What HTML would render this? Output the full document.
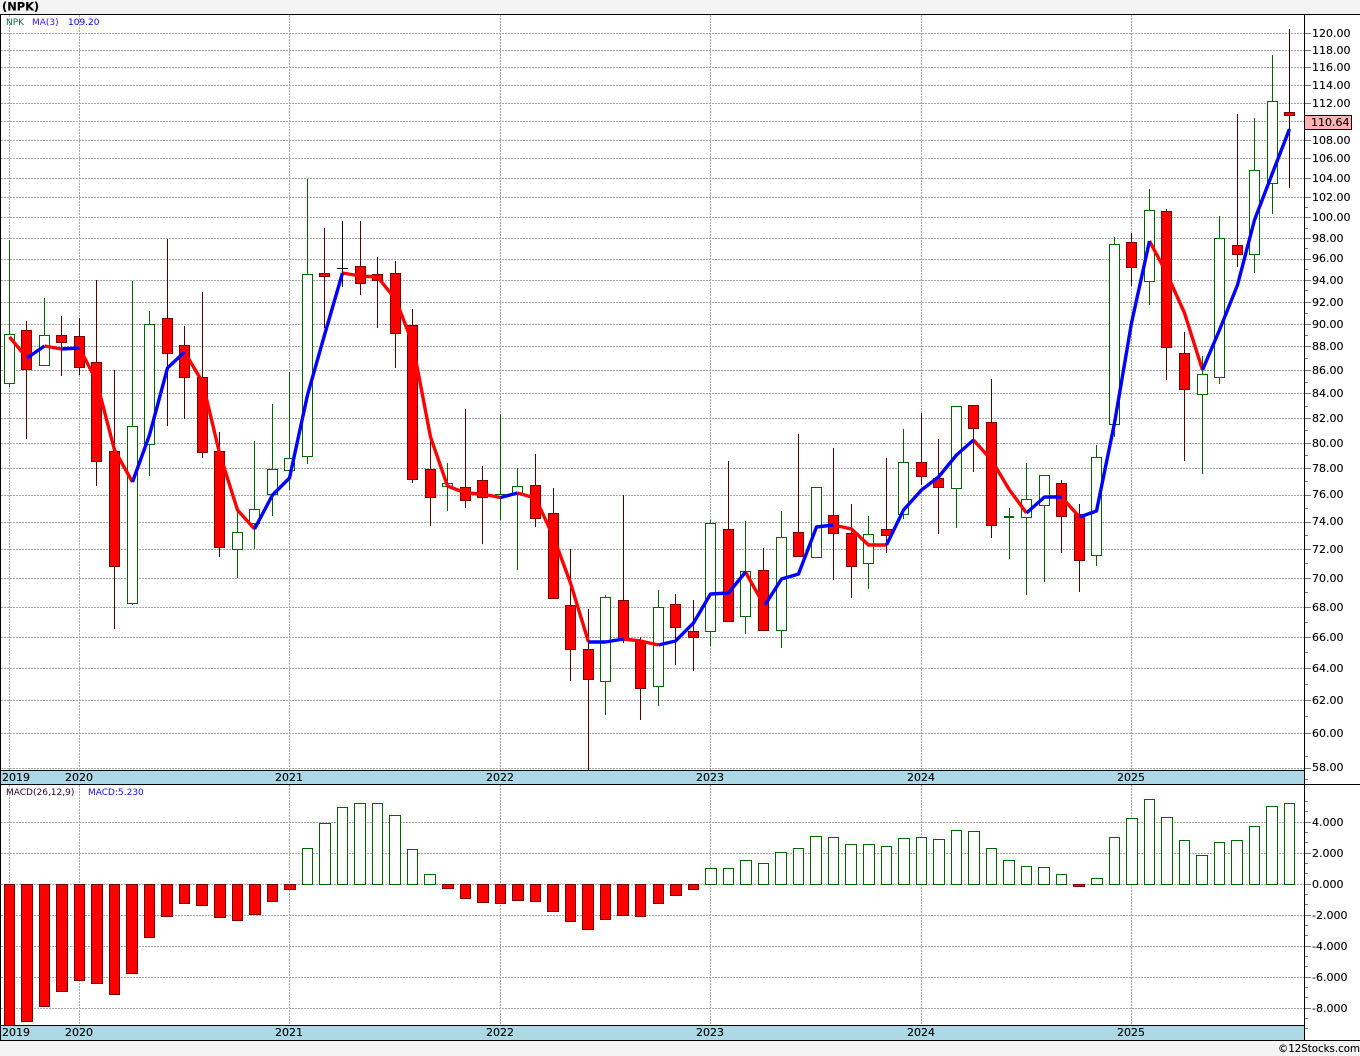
<!DOCTYPE html>
<html><head><meta charset="utf-8"><title>NPK</title>
<style>html,body{margin:0;padding:0;background:#f3f3f3;width:1360px;height:1056px;overflow:hidden}svg{display:block}text{font-family:"DejaVu Sans","Liberation Sans",sans-serif;font-size:11px;fill:#000;stroke:#000;stroke-width:.12px}</style></head>
<body>
<svg width="1360" height="1056" viewBox="0 0 1360 1056" xmlns="http://www.w3.org/2000/svg">
<rect x="0" y="0" width="1360" height="1056" fill="#f3f3f3"/>
<rect x="0" y="14" width="1360" height="1027" fill="#fff"/>
<text x="2" y="10.5" style="font-weight:bold;font-size:11.4px;fill:#000">(NPK)</text>
<g shape-rendering="crispEdges">
<path fill="none" stroke="#a8a8a8" stroke-dasharray="2 1" d="M1 33.5H1304M1 50.5H1304M1 67.5H1304M1 85.5H1304M1 103.5H1304M1 121.5H1304M1 140.5H1304M1 158.5H1304M1 178.5H1304M1 197.5H1304M1 217.5H1304M1 238.5H1304M1 259.5H1304M1 280.5H1304M1 302.5H1304M1 324.5H1304M1 346.5H1304M1 370.5H1304M1 393.5H1304M1 418.5H1304M1 443.5H1304M1 468.5H1304M1 495.5H1304M1 522.5H1304M1 549.5H1304M1 578.5H1304M1 607.5H1304M1 637.5H1304M1 668.5H1304M1 700.5H1304M1 733.5H1304M1 768.5H1304M1 822.5H1304M1 853.5H1304M1 884.5H1304M1 915.5H1304M1 946.5H1304M1 977.5H1304M1 1008.5H1304M9.5 15V770M79.5 15V770M289.5 15V770M500.5 15V770M710.5 15V770M921.5 15V770M1131.5 15V770M9.5 785V1025M79.5 785V1025M289.5 785V1025M500.5 785V1025M710.5 785V1025M921.5 785V1025M1131.5 785V1025"/>
<!-- wicks -->
<path fill="none" stroke="#006400" d="M9.5 240V387M44.5 298V365M132.5 281V605M149.5 311V476M237.5 510V578M254.5 441V549M272.5 404V516M289.5 372V490M307.5 179V464M447.5 463V511M500.5 414V520M517.5 468V570M605.5 595V715M658.5 590V706M710.5 520V646M745.5 521V634M781.5 511V648M816.5 487V557M868.5 516V589M903.5 429V519M956.5 406V528M1009.5 508V559M1026.5 463V595M1044.5 475V582M1096.5 445V566M1114.5 237V437M1149.5 189V305M1202.5 356V474M1219.5 216V384M1254.5 118V273M1272.5 55V214"/>
<path fill="none" stroke="#550000" d="M26.5 321V439M61.5 316V376M79.5 318V375M96.5 280V486M114.5 370V629M167.5 239V426M184.5 326V419M202.5 292V458M219.5 432V557M324.5 228V328M360.5 221V295M377.5 257V328M395.5 261V368M412.5 309V483M430.5 438V526M465.5 409V508M482.5 466V544M535.5 454V527M553.5 488V598M570.5 549V681M588.5 609V770M623.5 495V643M640.5 637V720M675.5 594V665M693.5 600V671M728.5 461V622M763.5 548V631M798.5 434V556M833.5 448V580M851.5 504V598M886.5 458V553M921.5 413V485M938.5 439V534M973.5 405V472M991.5 379V538M1061.5 480V553M1079.5 504V592M1131.5 233V286M1166.5 209V380M1184.5 332V461M1237.5 114V267"/>
<path fill="none" stroke="#3a0000" d="M1289.5 29V188"/>
<path fill="none" stroke="#000" d="M342.5 221V287M337 268.5H348"/>
<!-- green bodies -->
<path fill="#fff" stroke="#006400" d="M4.5 334.5h10V383.5h-10ZM39.5 335.5h10V365.5h-10ZM127.5 426.5h10V603.5h-10ZM144.5 324.5h10V444.5h-10ZM232.5 532.5h10V549.5h-10ZM249.5 509.5h10V523.5h-10ZM267.5 469.5h10V494.5h-10ZM284.5 458.5h10V470.5h-10ZM302.5 274.5h10V456.5h-10ZM442.5 483.5h10V486.5h-10ZM495.5 494.5h10V497.5h-10ZM512.5 486.5h10V493.5h-10ZM600.5 597.5h10V681.5h-10ZM653.5 607.5h10V686.5h-10ZM705.5 523.5h10V631.5h-10ZM740.5 571.5h10V616.5h-10ZM776.5 537.5h10V630.5h-10ZM811.5 487.5h10V557.5h-10ZM863.5 534.5h10V563.5h-10ZM898.5 462.5h10V514.5h-10ZM951.5 406.5h10V488.5h-10ZM1021.5 499.5h10V517.5h-10ZM1039.5 475.5h10V505.5h-10ZM1091.5 457.5h10V555.5h-10ZM1109.5 244.5h10V424.5h-10ZM1144.5 210.5h10V281.5h-10ZM1197.5 374.5h10V394.5h-10ZM1214.5 238.5h10V377.5h-10ZM1249.5 170.5h10V254.5h-10ZM1267.5 101.5h10V183.5h-10Z"/>
<rect x="1004" y="516" width="10" height="2" fill="#006400"/>
<!-- red bodies -->
<path fill="#f00" stroke="#7a0000" d="M21.5 330.5h10V369.5h-10ZM56.5 335.5h10V342.5h-10ZM74.5 336.5h10V367.5h-10ZM91.5 362.5h10V461.5h-10ZM109.5 451.5h10V566.5h-10ZM162.5 318.5h10V353.5h-10ZM179.5 345.5h10V377.5h-10ZM197.5 377.5h10V452.5h-10ZM214.5 451.5h10V547.5h-10ZM319.5 273.5h10V276.5h-10ZM355.5 266.5h10V283.5h-10ZM372.5 274.5h10V280.5h-10ZM390.5 273.5h10V333.5h-10ZM407.5 325.5h10V479.5h-10ZM425.5 469.5h10V497.5h-10ZM460.5 487.5h10V500.5h-10ZM477.5 480.5h10V497.5h-10ZM530.5 485.5h10V518.5h-10ZM548.5 513.5h10V598.5h-10ZM565.5 605.5h10V649.5h-10ZM583.5 649.5h10V679.5h-10ZM618.5 600.5h10V640.5h-10ZM635.5 641.5h10V688.5h-10ZM670.5 604.5h10V627.5h-10ZM688.5 631.5h10V637.5h-10ZM723.5 529.5h10V621.5h-10ZM758.5 570.5h10V630.5h-10ZM793.5 532.5h10V556.5h-10ZM828.5 515.5h10V533.5h-10ZM846.5 533.5h10V566.5h-10ZM881.5 529.5h10V535.5h-10ZM916.5 462.5h10V476.5h-10ZM933.5 478.5h10V487.5h-10ZM968.5 405.5h10V428.5h-10ZM986.5 422.5h10V525.5h-10ZM1056.5 483.5h10V516.5h-10ZM1074.5 514.5h10V560.5h-10ZM1126.5 242.5h10V267.5h-10ZM1161.5 211.5h10V347.5h-10ZM1179.5 353.5h10V389.5h-10ZM1232.5 245.5h10V254.5h-10ZM1284.5 112.5h10V115.5h-10Z"/>
</g>
<!-- MA -->
<g fill="none" stroke-width="3.4" stroke-linejoin="round">
<path stroke="#f00" d="M9.5 337L27 358M44.5 346L61.5 349M79.5 348L96.5 381L114.5 450L132.5 482M184.5 352L202.5 382L219.5 453L237.5 510L254.5 529M342.5 273L360.5 276L377.5 277L395.5 299L412.5 343L430.5 437L447.5 486L465.5 493L482.5 494L500.5 497.5M517.5 493L535.5 498L553.5 537L570.5 583L588.5 642M623.5 639L640.5 641L658.5 645M745.5 572L765 607M833.5 525L851.5 529L868.5 545L886.5 545M973.5 440L991.5 460L1009.5 490L1026.5 513M1061.5 497L1079.5 517M1149.5 241L1166.5 273L1184.5 313L1202.5 370"/>
<path stroke="#00f" d="M27 358L44.5 346M61.5 349L79.5 348M132.5 482L149.5 435L167.5 368L184.5 352M254.5 529L272.5 495L289.5 478L307.5 395L324.5 335L342.5 273M500.5 497.5L517.5 493M588.5 642L605.5 642L623.5 639M658.5 645L675.5 641L693.5 623L710.5 594L728.5 593L745.5 572M765 605L781.5 579L798.5 574L816.5 527L833.5 525M886.5 545L903.5 510L921.5 490L938.5 477L956.5 455L973.5 440M1026.5 513L1044.5 497L1061.5 497M1079.5 517L1096.5 511L1114.5 423L1131.5 323L1149.5 241M1202.5 370L1219.5 330L1237.5 285L1254.5 220L1272.5 173L1289.5 129"/>
</g>
<g shape-rendering="crispEdges">
<!-- MACD -->
<path fill="#f00" stroke="#7a0000" d="M4.5 884.5H14.5V1025.5H4.5ZM21.5 884.5H32.5V1021.5H21.5ZM39.5 884.5H49.5V1006.5H39.5ZM56.5 884.5H67.5V991.5H56.5ZM74.5 884.5H84.5V980.5H74.5ZM91.5 884.5H102.5V983.5H91.5ZM109.5 884.5H119.5V994.5H109.5ZM126.5 884.5H137.5V973.5H126.5ZM144.5 884.5H154.5V937.5H144.5ZM161.5 884.5H172.5V916.5H161.5ZM179.5 884.5H189.5V903.5H179.5ZM196.5 884.5H207.5V905.5H196.5ZM214.5 884.5H225.5V917.5H214.5ZM232.5 884.5H242.5V920.5H232.5ZM249.5 884.5H260.5V914.5H249.5ZM267.5 884.5H277.5V901.5H267.5ZM284.5 884.5H295.5V889.5H284.5ZM442.5 884.5H453.5V888.5H442.5ZM460.5 884.5H470.5V898.5H460.5ZM477.5 884.5H488.5V902.5H477.5ZM495.5 884.5H505.5V903.5H495.5ZM512.5 884.5H523.5V900.5H512.5ZM530.5 884.5H540.5V901.5H530.5ZM547.5 884.5H558.5V911.5H547.5ZM565.5 884.5H575.5V921.5H565.5ZM582.5 884.5H593.5V929.5H582.5ZM600.5 884.5H610.5V919.5H600.5ZM617.5 884.5H628.5V915.5H617.5ZM635.5 884.5H645.5V916.5H635.5ZM653.5 884.5H663.5V903.5H653.5ZM670.5 884.5H681.5V895.5H670.5ZM688.5 884.5H698.5V889.5H688.5ZM1073.5 884.5H1084.5V886.5H1073.5Z"/>
<path fill="#fff" stroke="#006400" d="M302.5 848.5H312.5V884.5H302.5ZM319.5 823.5H330.5V884.5H319.5ZM337.5 807.5H347.5V884.5H337.5ZM354.5 803.5H365.5V884.5H354.5ZM372.5 803.5H382.5V884.5H372.5ZM389.5 815.5H400.5V884.5H389.5ZM407.5 849.5H417.5V884.5H407.5ZM424.5 874.5H435.5V884.5H424.5ZM705.5 868.5H716.5V884.5H705.5ZM723.5 868.5H733.5V884.5H723.5ZM740.5 860.5H751.5V884.5H740.5ZM758.5 863.5H768.5V884.5H758.5ZM775.5 852.5H786.5V884.5H775.5ZM793.5 848.5H803.5V884.5H793.5ZM810.5 836.5H821.5V884.5H810.5ZM828.5 837.5H838.5V884.5H828.5ZM845.5 844.5H856.5V884.5H845.5ZM863.5 844.5H874.5V884.5H863.5ZM881.5 846.5H891.5V884.5H881.5ZM898.5 838.5H909.5V884.5H898.5ZM916.5 837.5H926.5V884.5H916.5ZM933.5 839.5H944.5V884.5H933.5ZM951.5 830.5H961.5V884.5H951.5ZM968.5 831.5H979.5V884.5H968.5ZM986.5 848.5H996.5V884.5H986.5ZM1003.5 860.5H1014.5V884.5H1003.5ZM1021.5 866.5H1031.5V884.5H1021.5ZM1038.5 867.5H1049.5V884.5H1038.5ZM1056.5 874.5H1066.5V884.5H1056.5ZM1091.5 878.5H1102.5V884.5H1091.5ZM1109.5 837.5H1119.5V884.5H1109.5ZM1126.5 818.5H1137.5V884.5H1126.5ZM1144.5 799.5H1154.5V884.5H1144.5ZM1161.5 817.5H1172.5V884.5H1161.5ZM1179.5 840.5H1189.5V884.5H1179.5ZM1196.5 855.5H1207.5V884.5H1196.5ZM1214.5 842.5H1224.5V884.5H1214.5ZM1231.5 840.5H1242.5V884.5H1231.5ZM1249.5 826.5H1259.5V884.5H1249.5ZM1266.5 806.5H1277.5V884.5H1266.5ZM1284.5 803.5H1294.5V884.5H1284.5Z"/>
<!-- bands -->
<rect x="1" y="770" width="1303" height="14" fill="#add8e6"/>
<rect x="1" y="1025" width="1303" height="15" fill="#add8e6"/>
<rect x="1305" y="15" width="55" height="1025" fill="#fff"/>
<path fill="none" stroke="#000" d="M0 14.5H1360M0.5 14V1041M1304.5 14V1041M0 770.5H1304M0 784.5H1360M0 1025.5H1304M0 1040.5H1360"/>
<!-- ticks -->
<path fill="none" stroke="#777" d="M1305 33.5H1311M1305 50.5H1311M1305 67.5H1311M1305 85.5H1311M1305 103.5H1311M1305 140.5H1311M1305 158.5H1311M1305 178.5H1311M1305 197.5H1311M1305 217.5H1311M1305 238.5H1311M1305 259.5H1311M1305 280.5H1311M1305 302.5H1311M1305 324.5H1311M1305 346.5H1311M1305 370.5H1311M1305 393.5H1311M1305 418.5H1311M1305 443.5H1311M1305 468.5H1311M1305 495.5H1311M1305 522.5H1311M1305 549.5H1311M1305 578.5H1311M1305 607.5H1311M1305 637.5H1311M1305 668.5H1311M1305 700.5H1311M1305 733.5H1311M1305 768.5H1311M1305 207.5H1308M1305 228.5H1308M1305 248.5H1308M1305 269.5H1308M1305 290.5H1308M1305 313.5H1308M1305 335.5H1308M1305 358.5H1308M1305 382.5H1308M1305 406.5H1308M1305 430.5H1308M1305 455.5H1308M1305 481.5H1308M1305 508.5H1308M1305 535.5H1308M1305 563.5H1308M1305 592.5H1308M1305 622.5H1308M1305 652.5H1308M1305 684.5H1308M1305 716.5H1308M1305 756.5H1308M1305 779.5H1308M1305 822.5H1311M1305 853.5H1311M1305 884.5H1311M1305 915.5H1311M1305 946.5H1311M1305 977.5H1311M1305 1008.5H1311M1305 801.5H1308M1305 811.5H1308M1305 832.5H1308M1305 842.5H1308M1305 863.5H1308M1305 873.5H1308M1305 894.5H1308M1305 904.5H1308M1305 925.5H1308M1305 935.5H1308M1305 956.5H1308M1305 966.5H1308M1305 987.5H1308M1305 997.5H1308M1305 1018.5H1308M1305 1028.5H1308"/>
<rect x="1304.5" y="115.5" width="47" height="14" fill="#ffb3b3" stroke="#000"/>
</g>
<!-- legend -->
<g style="font-size:9px">
<text x="6" y="25" style="font-size:9px;fill:#1a6a3a;stroke:none">NPK</text>
<text x="32" y="25" style="font-size:9px;fill:#3a10ff;stroke:none">MA(3)</text>
<text x="68" y="25" style="font-size:9px;fill:#0000ff;stroke:none">109.20</text>
<text x="6" y="795" style="font-size:9px;fill:#300030;stroke:none">MACD(26,12,9)</text>
<text x="88" y="795" style="font-size:9px;fill:#1a10ff;stroke:none">MACD:5.230</text>
</g>
<!-- year labels -->
<text x="2" y="781">2019</text><text x="65" y="781">2020</text><text x="275" y="781">2021</text><text x="486" y="781">2022</text><text x="696" y="781">2023</text><text x="907" y="781">2024</text><text x="1117" y="781">2025</text>
<text x="2" y="1036">2019</text><text x="65" y="1036">2020</text><text x="275" y="1036">2021</text><text x="486" y="1036">2022</text><text x="696" y="1036">2023</text><text x="907" y="1036">2024</text><text x="1117" y="1036">2025</text>
<!-- axis labels -->
<text x="1312" y="37">120.00</text><text x="1312" y="54">118.00</text><text x="1312" y="71">116.00</text><text x="1312" y="89">114.00</text><text x="1312" y="107">112.00</text>
<text x="1311" y="126">110.64</text>
<text x="1312" y="144">108.00</text><text x="1312" y="162">106.00</text><text x="1312" y="182">104.00</text><text x="1312" y="201">102.00</text><text x="1312" y="221">100.00</text>
<text x="1312" y="242">98.00</text><text x="1312" y="262">96.00</text><text x="1312" y="284">94.00</text><text x="1312" y="306">92.00</text><text x="1312" y="328">90.00</text><text x="1312" y="350">88.00</text><text x="1312" y="374">86.00</text><text x="1312" y="397">84.00</text><text x="1312" y="422">82.00</text><text x="1312" y="447">80.00</text><text x="1312" y="472">78.00</text><text x="1312" y="498">76.00</text><text x="1312" y="525">74.00</text><text x="1312" y="553">72.00</text><text x="1312" y="582">70.00</text><text x="1312" y="611">68.00</text><text x="1312" y="641">66.00</text><text x="1312" y="672">64.00</text><text x="1312" y="704">62.00</text><text x="1312" y="737">60.00</text><text x="1312" y="771">58.00</text>
<text x="1312" y="826">4.000</text><text x="1312" y="857">2.000</text><text x="1312" y="888">0.000</text><text x="1312" y="919">-2.000</text><text x="1312" y="950">-4.000</text><text x="1312" y="981">-6.000</text><text x="1312" y="1012">-8.000</text>
<text x="1278" y="1052" textLength="82" lengthAdjust="spacingAndGlyphs">©12Stocks.com</text>
</svg>
</body></html>
